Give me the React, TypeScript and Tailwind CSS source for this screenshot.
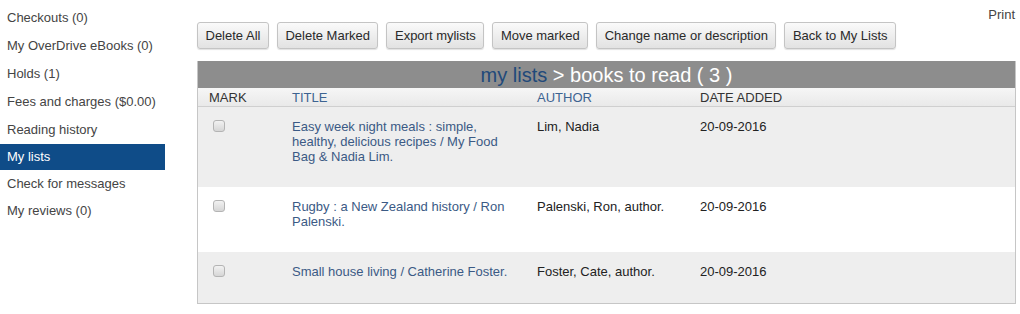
import React from 'react';

const nav = [
  { label: 'Checkouts (0)', h: 'h-[28px]' },
  { label: 'My OverDrive eBooks (0)', h: 'h-[28px]' },
  { label: 'Holds (1)', h: 'h-[28px]' },
  { label: 'Fees and charges ($0.00)', h: 'h-[28px]' },
  { label: 'Reading history', h: 'h-[28px]' },
  { label: 'My lists', h: 'h-[26px]', active: true },
  { label: 'Check for messages', h: 'h-[27px]' },
  { label: 'My reviews (0)', h: 'h-[28px]' },
];

const buttons = ['Delete All', 'Delete Marked', 'Export mylists', 'Move marked', 'Change name or description', 'Back to My Lists'];

const rows = [
  { title: 'Easy week night meals : simple, healthy, delicious recipes / My Food Bag & Nadia Lim.', author: 'Lim, Nadia', date: '20-09-2016', bg: 'bg-[#eeeeee]', pb: 'pb-[23px]' },
  { title: 'Rugby : a New Zealand history / Ron Palenski.', author: 'Palenski, Ron, author.', date: '20-09-2016', bg: 'bg-white', pb: 'pb-[23px]' },
  { title: 'Small house living / Catherine Foster.', author: 'Foster, Cate, author.', date: '20-09-2016', bg: 'bg-[#eeeeee]', pb: 'pb-[24px]' },
];

function Checkbox() {
  return (
    <span className="mt-[1px] ml-[4px] block h-[12px] w-[12px] rounded-[3px] border border-[#b4b4b4] bg-gradient-to-b from-[#f2f2f2] to-[#d6d6d6]"></span>
  );
}

export default function App() {
  return (
    <div className="relative flex h-[314px] w-[1020px] bg-white font-['Liberation_Sans',Arial,sans-serif] text-[13px] text-[#333]">
      <aside className="w-[165px] pt-[4px]">
        {nav.map((n) => (
          <div
            key={n.label}
            className={`${n.h} flex items-center pl-[7px] ${n.active ? 'bg-[#0f4c88] text-white' : 'text-[#444]'}`}
          >
            {n.label}
          </div>
        ))}
      </aside>

      <main className="ml-[32px] w-[819px] pt-[22px]">
        <div className="flex gap-[8px]">
          {buttons.map((b) => (
            <button
              key={b}
              className="h-[27px] rounded-[3px] border border-[#c4c4c4] bg-gradient-to-b from-[#fafafa] to-[#e2e2e2] px-[7.5px] text-[13px] text-[#2a2a2a] shadow-[0_1px_1px_rgba(0,0,0,0.12)]"
            >
              {b}
            </button>
          ))}
        </div>

        <div className="mt-[12px] border-x border-b border-[#c6c6c6]">
          <div className="flex h-[27px] items-center justify-center bg-[#8d8d8d] text-[20px] leading-none text-white">
            <span className="text-[#21497a]">my lists</span>
            <span className="whitespace-pre"> &gt; books to read ( 3 )</span>
          </div>
          <div className="grid h-[19px] grid-cols-[83px_245px_163px_1fr] items-center border-b border-[#cfcfcf] bg-gradient-to-b from-[#f6f6f6] to-[#e9e9e9] px-[11px] leading-none">
            <span className="text-[#333]">MARK</span>
            <span className="text-[#3d6391]">TITLE</span>
            <span className="text-[#3d6391]">AUTHOR</span>
            <span className="text-[#333]">DATE ADDED</span>
          </div>
          {rows.map((r, i) => (
            <div
              key={i}
              className={`grid grid-cols-[83px_245px_163px_1fr] px-[11px] pt-[12px] ${r.pb} leading-[15px] ${r.bg}`}
            >
              <div>
                <Checkbox />
              </div>
              <div className="pr-[20px] text-[#3b5a85]">{r.title}</div>
              <div className="text-[#222]">{r.author}</div>
              <div className="text-[#222]">{r.date}</div>
            </div>
          ))}
        </div>
      </main>

      <div className="absolute right-[5px] top-[5px] text-[#444]">Print</div>
    </div>
  );
}
